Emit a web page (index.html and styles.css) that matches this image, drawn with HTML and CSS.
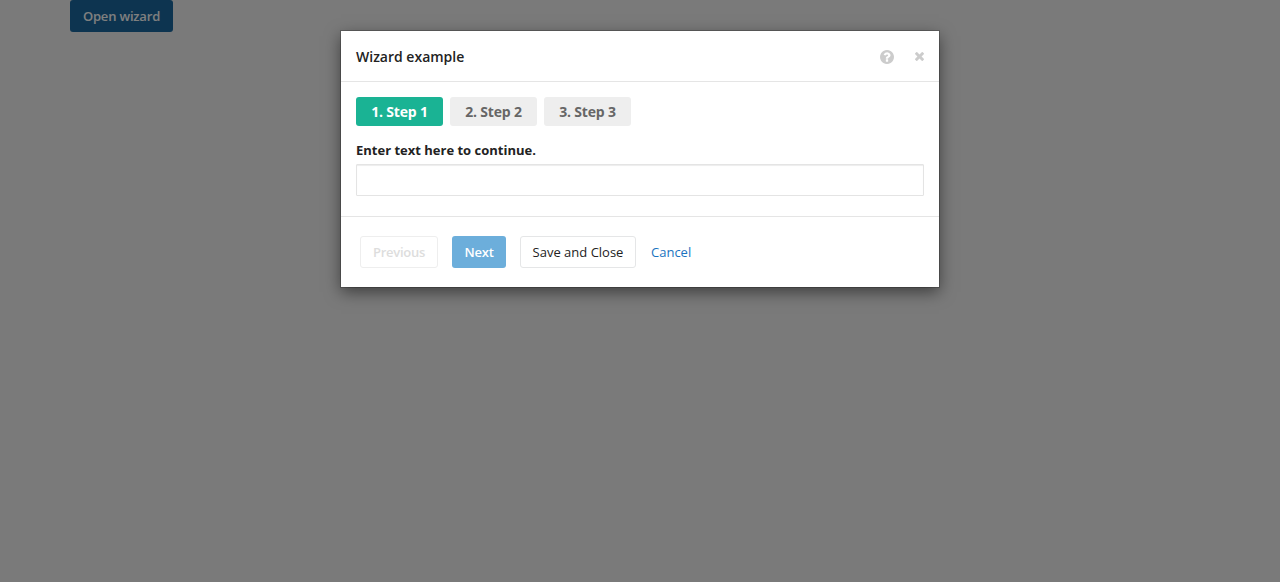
FILE: index.html
```html
<!DOCTYPE html>
<html lang="en">
<head>
<meta charset="utf-8">
<title>Wizard example</title>
<link rel="stylesheet" href="styles.css">
</head>
<body>
<main class="page"><button class="btn btn-primary">Open wizard</button></main>
<div class="overlay">
  <section class="modal">
    <header class="modal-header">
      <h4 class="modal-title">Wizard example</h4>
      <svg class="icon-help" viewBox="0 0 1536 1536"><path d="M896 1248v-192q0-14-9-23t-23-9H672q-14 0-23 9t-9 23v192q0 14 9 23t23 9h192q14 0 23-9t9-23zm256-672q0-88-55.500-163T958 297t-170-41q-243 0-371 213-15 24 8 42l132 100q7 6 19 6 16 0 25-12 53-68 86-92 34-24 86-24 48 0 85.500 26t37.500 59q0 38-20 61t-68 45q-63 28-115.500 86.500T640 892v36q0 14 9 23t23 9h192q14 0 23-9t9-23q0-19 21.500-49.500T972 829q32-18 49-28.500t46-35 44.500-48 28-60.500 12.500-81zm384 192q0 209-103 385.500T1153.500 1433 768 1536t-385.500-103T103 1153.500 0 768t103-385.500T382.500 103 768 0t385.500 103T1433 382.500 1536 768z"/></svg>
      <svg class="icon-close" viewBox="0 0 1188 1188"><path d="M1188 956q0 40-28 68l-136 136q-28 28-68 28t-68-28L594 866l-294 294q-28 28-68 28t-68-28L28 1024Q0 996 0 956t28-68l294-294L28 300Q0 272 0 232t28-68L164 28Q192 0 232 0t68 28l294 294L888 28q28-28 68-28t68 28l136 136q28 28 28 68t-28 68L866 594l294 294q28 28 28 68z"/></svg>
    </header>
    <div class="modal-body">
      <ol class="steps">
        <li class="step step-active">1. Step 1</li>
        <li class="step">2. Step 2</li>
        <li class="step">3. Step 3</li>
      </ol>
      <label class="field-label" for="text">Enter text here to continue.</label>
      <input class="field" id="text" type="text">
    </div>
    <footer class="modal-footer">
      <button class="btn btn-default btn-previous" disabled>Previous</button>
      <button class="btn btn-next" disabled>Next</button>
      <button class="btn btn-default btn-save">Save and Close</button>
      <a class="link">Cancel</a>
    </footer>
  </section>
</div>
</body>
</html>
```
FILE: styles.css
```css
* { box-sizing: border-box; }
body {
  margin: 0;
  height: 582px;
  overflow: hidden;
  background: #f4f4f4;
  color: #222;
  font: 13px/20px "Open Sans", sans-serif;
}
.page { padding-left: 70px; }
.btn {
  display: block;
  height: 32px;
  padding: 0;
  border: 1px solid transparent;
  border-radius: 3px;
  font: 13px/20px "Open Sans", sans-serif;
  white-space: nowrap;
}
.btn-primary { width: 103px; background: #1a69a0; color: #fff; font-weight: 600; letter-spacing: -.18px; }
.overlay { position: absolute; inset: 0; padding-top: 31px; background: rgba(0, 0, 0, .5); }
.modal {
  width: 598px;
  height: 256px;
  margin: 0 auto;
  background: #fff;
  box-shadow: 0 5px 15px rgba(0, 0, 0, .5), 0 0 0 1px rgba(0, 0, 0, .2);
}
.modal-header {
  display: flex;
  align-items: center;
  height: 51px;
  padding: 2px 15px 0;
  border-bottom: 1px solid #e5e5e5;
}
.modal-title { margin: 0 auto 0 0; font-size: 14px; font-weight: 600; }
.icon-help { width: 14px; height: 14px; margin-right: 20.5px; fill: #ccc; }
.icon-close { width: 9px; height: 9px; margin: 0 .5px 1px 0; fill: #ccc; }
.modal-body { height: 135px; padding: 15px 15px 0; border-bottom: 1px solid #e5e5e5; }
.steps { display: flex; gap: 7px; margin: 0 0 15px; padding: 0; list-style: none; }
.step {
  width: 87px;
  height: 29px;
  border-radius: 3px;
  background: #eee;
  color: #666;
  font-size: 14px;
  font-weight: 700;
  letter-spacing: -.18px;
  line-height: 29px;
  text-align: center;
}
.step-active { background: #1ab394; color: #fff; }
.field-label { display: block; height: 23px; font-weight: 700; line-height: 19px; }
.field { display: block; width: 100%; height: 32px; border: 1px solid #e4e4e4; border-radius: 1px; outline: 0; box-shadow: inset 0 1px 1px rgba(0, 0, 0, .075); }
.modal-footer { display: flex; align-items: center; height: 70px; padding: 0 19px; }
.btn-default { border-color: #e5e6e7; background: #fff; color: #222; }
.btn-previous { width: 78px; color: #ddd; border-color: #eee; font-weight: 600; letter-spacing: -.25px; }
.btn-next { width: 54px; margin: 0 14px; background: #6caedb; color: #fff; font-weight: 600; letter-spacing: -.2px; }
.btn-save { width: 116px; margin-right: 15px; }
.link { color: #1a73c0; }
```
